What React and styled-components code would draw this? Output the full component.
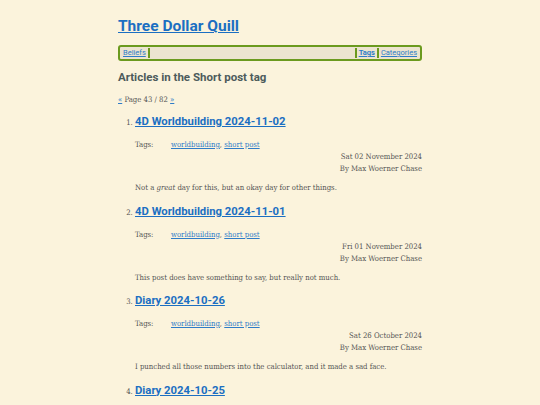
import React from "react";
import styled, { createGlobalStyle } from "styled-components";

const GlobalStyle = createGlobalStyle`
  html, body {
    margin: 0;
    padding: 0;
    background: #fbf3dc;
  }
  body {
    font-family: "DejaVu Serif", "Liberation Serif", serif;
    font-stretch: condensed;
    color: #555;
  }
`;

const Page = styled.div`
  width: 304px;
  margin: 0 auto;
  padding-top: 14px;
`;

const SiteTitle = styled.h1`
  margin: 0;
  font-family: Roboto, "Open Sans", sans-serif;
  font-stretch: normal;
  font-size: 15.5px;
  font-weight: 700;
  line-height: 24px;
  a {
    color: #1b6fc2;
  }
`;

const Nav = styled.nav`
  margin-top: 7px;
  display: flex;
  align-items: center;
  border: 2px solid #6b9a1e;
  border-radius: 3px;
  background: #ece4cf;
  height: 12px;
  padding: 0 1px;
  font-family: Roboto, "Open Sans", sans-serif;
  font-stretch: normal;
  font-size: 7.5px;
  line-height: 11px;
`;

const NavItem = styled.a`
  color: #2f7cc8;
  padding: 0 2px;
  font-weight: ${(p) => (p.$current ? 700 : 400)};
  border-left: ${(p) => (p.$left ? "2px solid #6b9a1e" : "none")};
  border-right: ${(p) => (p.$right ? "2px solid #6b9a1e" : "none")};
  line-height: 10px;
`;

const Spacer = styled.span`
  flex: 1;
`;

const Heading = styled.h2`
  margin: 8px 0 0;
  font-family: Roboto, "Open Sans", sans-serif;
  font-stretch: normal;
  font-size: 11.5px;
  font-weight: 700;
  line-height: 16px;
  color: #4d5b5b;
`;

const Pager = styled.p`
  margin: 9px 0 0;
  font-size: 7.7px;
  line-height: 12px;
  a {
    color: #2f7cc8;
  }
`;

const List = styled.ol`
  margin: 7px 0 0;
  padding-left: 17px;
  font-size: 7.7px;
  line-height: 12px;
`;

const Item = styled.li`
  margin-bottom: 8.5px;
`;

const PostTitle = styled.h3`
  margin: 0;
  display: inline;
  font-family: Roboto, "Open Sans", sans-serif;
  font-stretch: normal;
  font-size: 11.3px;
  font-weight: 700;
  line-height: 18px;
  a {
    color: #1b6fc2;
  }
`;

const TagRow = styled.div`
  display: flex;
  margin-top: 8px;
`;

const TagLabel = styled.span`
  width: 36px;
`;

const Link = styled.a`
  color: #2f7cc8;
`;

const Meta = styled.div`
  text-align: right;
`;

const Summary = styled.p`
  margin: 7px 0 0;
`;

const posts = [
  {
    title: "4D Worldbuilding 2024-11-02",
    date: "Sat 02 November 2024",
    summary: (
      <>
        Not a <em>great</em> day for this, but an okay day for other things.
      </>
    ),
  },
  {
    title: "4D Worldbuilding 2024-11-01",
    date: "Fri 01 November 2024",
    summary: "This post does have something to say, but really not much.",
  },
  {
    title: "Diary 2024-10-26",
    date: "Sat 26 October 2024",
    summary:
      "I punched all those numbers into the calculator, and it made a sad face.",
  },
  {
    title: "Diary 2024-10-25",
    date: "Fri 25 October 2024",
    summary: "",
  },
];

export default function App() {
  return (
    <>
      <GlobalStyle />
      <Page>
        <SiteTitle>
          <a href="#">Three Dollar Quill</a>
        </SiteTitle>
        <Nav>
          <NavItem href="#" $right>
            Beliefs
          </NavItem>
          <Spacer />
          <NavItem href="#" $left $right $current>
            Tags
          </NavItem>
          <NavItem href="#">Categories</NavItem>
        </Nav>
        <Heading>Articles in the Short post tag</Heading>
        <Pager>
          <a href="#">«</a> Page 43 / 82 <a href="#">»</a>
        </Pager>
        <List start={1}>
          {posts.map((p) => (
            <Item key={p.title}>
              <PostTitle>
                <a href="#">{p.title}</a>
              </PostTitle>
              <TagRow>
                <TagLabel>Tags:</TagLabel>
                <span>
                  <Link href="#">worldbuilding</Link>,{" "}
                  <Link href="#">short post</Link>
                </span>
              </TagRow>
              <Meta>{p.date}</Meta>
              <Meta>By Max Woerner Chase</Meta>
              <Summary>{p.summary}</Summary>
            </Item>
          ))}
        </List>
      </Page>
    </>
  );
}
